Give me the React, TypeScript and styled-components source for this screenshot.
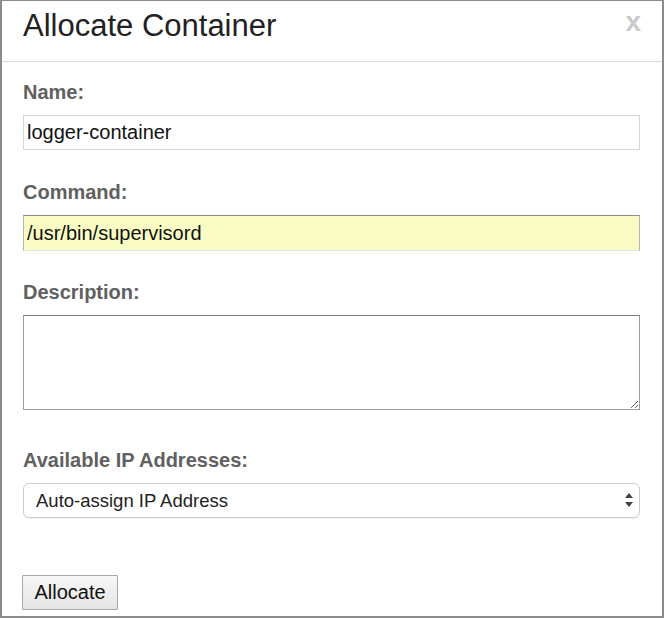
import styled, { createGlobalStyle } from 'styled-components';

const GlobalStyle = createGlobalStyle`
  html, body {
    margin: 0;
    padding: 0;
    background: #ffffff;
  }
  body {
    font-family: "Liberation Sans", Arial, Helvetica, sans-serif;
  }
`;

const Dialog = styled.div`
  box-sizing: border-box;
  width: 664px;
  height: 618px;
  border: 2px solid #8c8c8c;
  border-top-width: 1px;
  background: #ffffff;
  display: flex;
  flex-direction: column;
`;

const Header = styled.div`
  box-sizing: border-box;
  height: 61px;
  padding: 9px 21px 0 21px;
  border-bottom: 1px solid #dcdcdc;
  display: flex;
  align-items: flex-start;
  justify-content: space-between;
`;

const Title = styled.h1`
  margin: 0;
  font-size: 31px;
  line-height: 31px;
  font-weight: normal;
  color: #222222;
`;

const CloseButton = styled.span`
  font-size: 28px;
  line-height: 28px;
  font-weight: bold;
  color: #c9c9c9;
  margin-top: -2px;
  cursor: pointer;
`;

const Body = styled.form`
  padding: 20px 22px 0 21px;
  display: flex;
  flex-direction: column;
`;

const Field = styled.div<{ $spacing: number }>`
  display: flex;
  flex-direction: column;
  margin-bottom: ${(props) => props.$spacing}px;
`;

const Label = styled.label`
  font-size: 20px;
  line-height: 20px;
  font-weight: bold;
  color: #606060;
  margin-bottom: 13px;
`;

const TextInput = styled.input<{ $autofill?: boolean }>`
  box-sizing: border-box;
  width: 100%;
  height: ${(props) => (props.$autofill ? 36 : 35)}px;
  margin: 0;
  padding: 0 3px;
  font-family: "Liberation Sans", Arial, Helvetica, sans-serif;
  font-size: 20px;
  color: #111111;
  outline: none;
  border-radius: 0;
  background: ${(props) => (props.$autofill ? '#fafdc3' : '#ffffff')};
  border: 1px solid ${(props) => (props.$autofill ? '#b4b4b4' : '#d6d6d6')};
  border-top-color: ${(props) => (props.$autofill ? '#8a8a8a' : '#d6d6d6')};
  border-bottom-color: ${(props) => (props.$autofill ? '#e2e2e2' : '#d6d6d6')};
`;

const TextArea = styled.textarea`
  box-sizing: border-box;
  width: 100%;
  height: 95px;
  margin: 0;
  padding: 3px;
  font-family: "Liberation Sans", Arial, Helvetica, sans-serif;
  font-size: 20px;
  border: 1px solid #9c9c9c;
  border-top-color: #7c7c7c;
  border-radius: 0;
  outline: none;
  display: block;
`;

const SelectWrap = styled.div`
  position: relative;
`;

const Select = styled.select`
  box-sizing: border-box;
  width: 100%;
  height: 35px;
  margin: 0;
  padding: 0 30px 0 12px;
  appearance: none;
  -webkit-appearance: none;
  background: #ffffff;
  border: 1px solid #cbcbcb;
  border-radius: 6px;
  box-shadow: 0 1px 1px rgba(0, 0, 0, 0.04);
  font-family: "Liberation Sans", Arial, Helvetica, sans-serif;
  font-size: 18.5px;
  color: #222222;
  outline: none;
`;

const SelectArrows = styled.svg`
  position: absolute;
  right: 7px;
  top: 10px;
  pointer-events: none;
`;

const SubmitButton = styled.button`
  box-sizing: border-box;
  align-self: flex-start;
  width: 96px;
  height: 35px;
  margin-left: -1px;
  padding: 0;
  font-family: "Liberation Sans", Arial, Helvetica, sans-serif;
  font-size: 20px;
  color: #111111;
  background: linear-gradient(#f7f7f7, #e4e4e4);
  border: 1px solid #a9a9a9;
  border-radius: 1px;
  cursor: pointer;
`;

export default function App() {
  return (
    <>
      <GlobalStyle />
      <Dialog>
        <Header>
          <Title>Allocate Container</Title>
          <CloseButton>x</CloseButton>
        </Header>
        <Body onSubmit={(e) => e.preventDefault()}>
          <Field $spacing={32}>
            <Label htmlFor="name">Name:</Label>
            <TextInput id="name" defaultValue="logger-container" />
          </Field>
          <Field $spacing={31}>
            <Label htmlFor="command">Command:</Label>
            <TextInput id="command" $autofill defaultValue="/usr/bin/supervisord" />
          </Field>
          <Field $spacing={40}>
            <Label htmlFor="description">Description:</Label>
            <TextArea id="description" />
          </Field>
          <Field $spacing={57}>
            <Label htmlFor="ip">Available IP Addresses:</Label>
            <SelectWrap>
              <Select id="ip" defaultValue="auto">
                <option value="auto">Auto-assign IP Address</option>
              </Select>
              <SelectArrows width="8" height="15" viewBox="0 0 8 15">
                <polygon points="4,0 8,5 0,5" fill="#444" />
                <polygon points="0,9 8,9 4,14" fill="#444" />
              </SelectArrows>
            </SelectWrap>
          </Field>
          <SubmitButton type="submit">Allocate</SubmitButton>
        </Body>
      </Dialog>
    </>
  );
}
